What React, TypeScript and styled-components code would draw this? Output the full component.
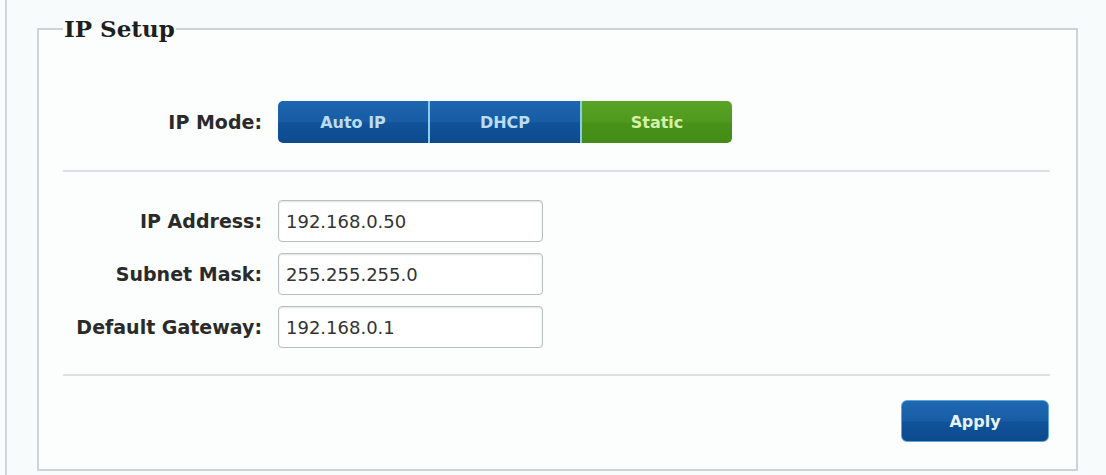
import React from "react";
import styled, { createGlobalStyle } from "styled-components";

const Global = createGlobalStyle`
  html, body { margin: 0; padding: 0; background: #f7fbfb; }
  body { font-family: "DejaVu Sans", Verdana, sans-serif; }
  * { box-sizing: border-box; }
`;

const Page = styled.div`
  margin-left: 5px;
  border-left: 2px solid #cfd6d8;
  min-height: 475px;
  padding: 15px 28px 4px 30px;
`;

const Box = styled.fieldset`
  margin: 0;
  border: 2px solid #cdd3d6;
  background: #fcfefe;
  padding: 58px 26px 27px 24px;
  min-width: 0;
`;

const Legend = styled.legend`
  font-family: "DejaVu Serif", Georgia, serif;
  font-weight: bold;
  font-size: 23px;
  line-height: 28px;
  color: #1e1e1e;
  padding: 0 1px;
  margin-left: 0;
`;

const Row = styled.div`
  display: flex;
  align-items: center;
  gap: 16px;
  & + & { margin-top: 11px; }
`;

const Label = styled.label`
  width: 199px;
  text-align: right;
  font-weight: bold;
  font-size: 19px;
  color: #2a2a2a;
  flex: none;
`;

const Segmented = styled.div`
  display: flex;
  height: 42px;
`;

const Segment = styled.button<{ $active?: boolean; $first?: boolean; $last?: boolean }>`
  width: ${(p) => (p.$first ? 150 : 152)}px;
  height: 42px;
  border: none;
  border-left: ${(p) => (p.$first ? "none" : "2px solid #86cdf0")};
  border-radius: ${(p) => (p.$first ? "5px 0 0 5px" : p.$last ? "0 5px 5px 0" : "0")};
  font-family: "DejaVu Sans", Verdana, sans-serif;
  font-weight: bold;
  font-size: 16px;
  color: ${(p) => (p.$active ? "#d6f0a4" : "#b9dcf3")};
  background: ${(p) =>
    p.$active
      ? "linear-gradient(#59a426, #4f9a1e 50%, #48921a 52%, #438c16)"
      : "linear-gradient(#1d66b0, #175ca4 50%, #11529a 52%, #0e4b8e)"};
  cursor: pointer;
  padding: 0;
`;

const Divider = styled.hr<{ $top: number; $bottom: number }>`
  border: none;
  border-top: 2px solid #dde1e3;
  margin: ${(p) => `${p.$top}px 0 ${p.$bottom}px`};
`;

const Fields = styled.div`
  display: flex;
  flex-direction: column;
`;

const Input = styled.input`
  width: 265px;
  height: 42px;
  border: 1px solid #b9bec1;
  border-radius: 4px;
  box-shadow: inset 0 1px 2px rgba(0, 0, 0, 0.12);
  background: #ffffff;
  padding: 0 7px;
  font-family: "DejaVu Sans", Verdana, sans-serif;
  font-size: 18px;
  color: #333;
`;

const Actions = styled.div`
  display: flex;
  justify-content: flex-end;
  padding-right: 1px;
`;

const ApplyButton = styled.button`
  width: 148px;
  height: 42px;
  border: 1px solid #5ea7d8;
  border-radius: 6px;
  background: linear-gradient(#1e68b2, #175da5 50%, #11539a 52%, #0d4a8c);
  color: #e8f2fb;
  font-family: "DejaVu Sans", Verdana, sans-serif;
  font-weight: bold;
  font-size: 16px;
  cursor: pointer;
`;

export default function App() {
  return (
    <>
      <Global />
      <Page>
        <Box>
          <Legend>IP Setup</Legend>
          <Row>
            <Label>IP Mode:</Label>
            <Segmented>
              <Segment $first>Auto IP</Segment>
              <Segment>DHCP</Segment>
              <Segment $active $last>Static</Segment>
            </Segmented>
          </Row>
          <Divider $top={27} $bottom={28} />
          <Fields>
            <Row>
              <Label>IP Address:</Label>
              <Input defaultValue="192.168.0.50" />
            </Row>
            <Row>
              <Label>Subnet Mask:</Label>
              <Input defaultValue="255.255.255.0" />
            </Row>
            <Row>
              <Label>Default Gateway:</Label>
              <Input defaultValue="192.168.0.1" />
            </Row>
          </Fields>
          <Divider $top={26} $bottom={24} />
          <Actions>
            <ApplyButton>Apply</ApplyButton>
          </Actions>
        </Box>
      </Page>
    </>
  );
}
